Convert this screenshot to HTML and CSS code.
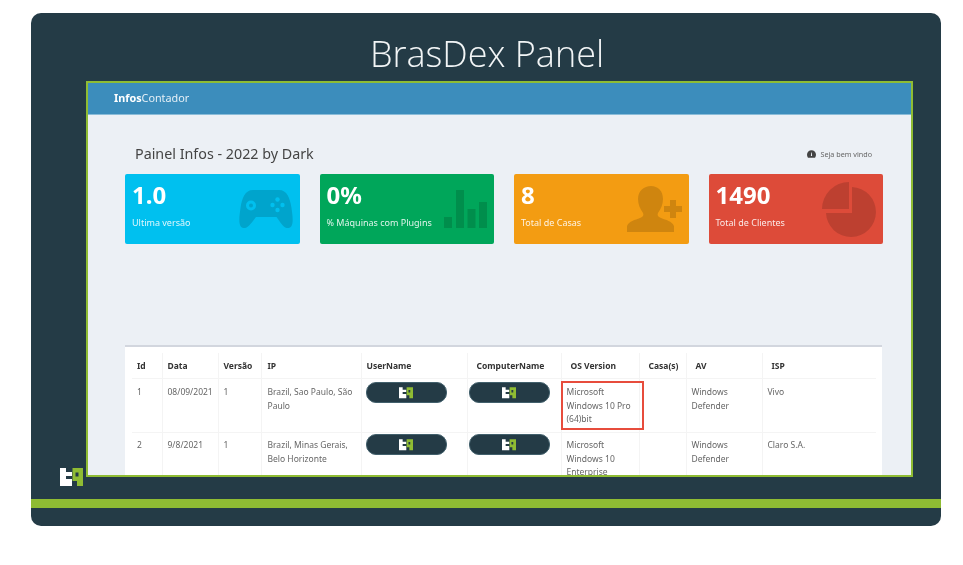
FILE: index.html
```html
<!DOCTYPE html>
<html lang="pt">
<head>
<meta charset="utf-8">
<title>BrasDex Panel</title>
<link rel="stylesheet" href="styles.css">
</head>
<body>
<svg class="defs" width="0" height="0" aria-hidden="true">
  <symbol id="logo" viewBox="0 0 23 19">
    <path fill="#fff" d="M0 0H6V4H12V8H6V11H12V18H0Z"/>
    <path fill="#8fbc33" fill-rule="evenodd" d="M12.500 0H23V18H17V13H12.500ZM15.500 4.500V8.500H18.500V4.500Z"/>
  </symbol>
</svg>
<main class="slide">
  <h1 class="title">BrasDex Panel</h1>
  <svg class="corner-logo"><use href="#logo"/></svg>
  <section class="panel">
    <header class="topbar"><b>Infos</b>Contador</header>
    <div class="content">
      <div class="page-head">
        <h2>Painel Infos - 2022 by Dark</h2>
        <span class="welcome">
          <svg viewBox="0 0 12 10" width="9" height="8"><path fill="#444" d="M6 0a6 6 0 0 0-6 6c0 1.500.5 2.800 1.300 4h9.400A7 7 0 0 0 12 6a6 6 0 0 0-6-6zm.8 7.800H5.200L5.600 3h.8z"/></svg>
          Seja bem vindo
        </span>
      </div>
      <div class="cards">
        <article class="card blue">
          <div class="num">1.0</div><div class="label">Ultima versão</div>
          <svg class="card-icon" viewBox="0 0 54 38"><path d="M14 0h26c8 0 11 8 12.500 18 1.500 10 2.500 19-3 20-5 1-8-6-12-11H17C13 32 9 39 4.500 38-1 37 0 28 1.500 18 3 8 6 0 14 0z"/><g fill="#00c0ef"><path fill-rule="evenodd" d="M12 10.500a5 5 0 1 0 0 10 5 5 0 0 0 0-10zm0 3a2 2 0 1 1 0 4 2 2 0 0 1 0-4z"/><circle cx="38.500" cy="9.500" r="2.200"/><circle cx="38.500" cy="20" r="2.200"/><circle cx="33.500" cy="15" r="2.200"/><circle cx="43.500" cy="15" r="2.200"/></g></svg>
        </article>
        <article class="card green">
          <div class="num">0%</div><div class="label">% Máquinas com Plugins</div>
          <svg class="card-icon bars" viewBox="0 0 43 38"><path d="M0 27h8v11H0zM12 0h8v38h-8zM23.500 19h8v19h-8zM35 12h8v26h-8z"/></svg>
        </article>
        <article class="card orange">
          <div class="num">8</div><div class="label">Total de Casas</div>
          <svg class="card-icon user" viewBox="0 0 55 46"><path d="M24 0c7 0 12 5 12 13 0 5-2 10-5 14-1 2 0 4 3 5 5 2 11 3 13 8v6H0v-6c2-5 8-6 13-8 3-1 4-3 3-5-3-4-5-9-5-14C11 5 17 0 24 0z"/><path d="M37 20h6v-6h6v6h6v6h-6v6h-6v-6h-6z"/></svg>
        </article>
        <article class="card red">
          <div class="num">1490</div><div class="label">Total de Clientes</div>
          <svg class="card-icon pie" viewBox="0 0 54 55"><path d="M30 5A25 25 0 1 1 4 31H30z"/><path d="M27 0V27H0A27 27 0 0 1 27 0z"/></svg>
        </article>
      </div>
      <div class="table-box">
        <table class="info">
          <colgroup><col class="c1"><col class="c2"><col class="c3"><col class="c4"><col class="c5"><col class="c6"><col class="c7"><col class="c8"><col class="c9"><col class="c10"></colgroup>
          <thead>
            <tr><th>Id</th><th>Data</th><th>Versão</th><th class="ip">IP</th><th>UserName</th><th class="ind">ComputerName</th><th class="ind">OS Version</th><th class="ind">Casa(s)</th><th class="ind">AV</th><th class="ind">ISP</th></tr>
          </thead>
          <tbody>
            <tr>
              <td>1</td><td>08/09/2021</td><td>1</td><td class="ip">Brazil, Sao Paulo, São Paulo</td>
              <td class="pillcell"><span class="pill"><svg><use href="#logo"/></svg></span></td>
              <td class="pillcell"><span class="pill"><svg><use href="#logo"/></svg></span></td>
              <td class="hl">Microsoft Windows 10 Pro (64)bit</td><td></td><td>Windows Defender</td><td>Vivo</td>
            </tr>
            <tr>
              <td>2</td><td>9/8/2021</td><td>1</td><td class="ip">Brazil, Minas Gerais, Belo Horizonte</td>
              <td class="pillcell"><span class="pill"><svg><use href="#logo"/></svg></span></td>
              <td class="pillcell"><span class="pill"><svg><use href="#logo"/></svg></span></td>
              <td>Microsoft Windows 10 Enterprise</td><td></td><td>Windows Defender</td><td>Claro S.A.</td>
            </tr>
          </tbody>
        </table>
      </div>
    </div>
  </section>
  <div class="bar"></div>
</main>
</body>
</html>
```
FILE: styles.css
```css
*, *::after { box-sizing: border-box; }
html, body { margin: 0; background: #fff; }
body { padding: 13px 22px 39px 31px; height: 565px; overflow: hidden; }
.defs { position: absolute; }
.slide { position: relative; width: 910px; height: 513px; background: #243b46; border-radius: 10px; overflow: hidden; display: flex; flex-direction: column; }
.title { margin: 0; height: 68px; font: 300 36px/82px "Open Sans", sans-serif; color: #f2f5f6; text-align: center; margin-left: 2px; filter: blur(.4px); }
.corner-logo { position: absolute; left: 29px; top: 455px; width: 23px; height: 19px; filter: blur(.4px); }
.panel { margin: 0 28px 0 55px; height: 396px; border: 2px solid #8fbc33; background: #ecf0f5; overflow: hidden; display: flex; flex-direction: column; filter: blur(.6px); flex: none; }
.topbar { height: 32px; flex: none; background: #3c8dbc; border-bottom: 1px solid #8abcd8; color: #e4eff6; font: 400 10.800px/29px "Noto Sans", sans-serif; padding-left: 26px; }
.topbar b { color: #fff; font-weight: 700; }
.content { flex: 1; min-height: 0; padding: 27px 29px 0 37px; }
.page-head { display: flex; justify-content: space-between; align-items: center; height: 24px; margin-left: 10px; }
.page-head h2 { margin: 0; font: 400 14.300px/24px "Noto Sans", sans-serif; color: #444; }
.welcome { font: 400 7.200px/24px "Noto Sans", sans-serif; color: #666; display: flex; align-items: center; gap: 4px; margin-right: 10px; }
.cards { display: grid; grid-template-columns: repeat(4, 174.500px); column-gap: 20px; margin-top: 8px; }
.card { position: relative; height: 70px; border-radius: 2px; color: #fff; padding: 6px 7px; overflow: hidden; }
.blue { background: #00c0ef; }
.green { background: #00a65a; }
.orange { background: #f39c12; }
.red { background: #dd4b39; }
.num { font: 700 24px/30px "Noto Sans", sans-serif; }
.label { font: 400 9px/14px "Noto Sans", sans-serif; margin-top: 6px; opacity: .88; }
.card-icon { position: absolute; right: 7px; top: 16px; width: 54px; height: 38px; fill: #000; opacity: .14; }
.bars { width: 43px; height: 38px; }
.user { top: 12px; width: 55px; height: 46px; }
.pie { top: 8px; width: 54px; height: 55px; }
.table-box { margin-top: 101px; height: 140px; background: #fff; border-top: 2px solid #d2d6de; padding: 6px 7px 0; }
.info { width: 744px; table-layout: fixed; border-collapse: collapse; font-family: "Noto Sans", sans-serif; }
.c1 { width: 30px; } .c2 { width: 56px; } .c3 { width: 43px; } .c4 { width: 100px; } .c5 { width: 106px; } .c6 { width: 94px; } .c7 { width: 78px; } .c8 { width: 47px; } .c9 { width: 76px; } .c10 { width: 114px; }
.info th, .info td { border: 1px solid #f4f4f4; border-top: 0; padding: 0 5px; text-align: left; vertical-align: top; }
.info tr > :first-child, .info tr > :last-child { border-left: 0; border-right: 0; }
.info th { height: 25px; font-size: 8.500px; line-height: 25px; font-weight: 700; color: #333; white-space: nowrap; }
.info th.ind { padding-left: 9px; }
.info td { height: 54px; padding-top: 6px; font-size: 8.500px; line-height: 13.500px; color: #666; }
.info .ip { padding-left: 6px; }
.info tr + tr td { padding-top: 5px; }
.info td.pillcell { padding: 3px 5px 0 4px; }
.info td.pillcell + td.pillcell { padding-left: 1px; }
.info tr + tr td.pillcell { padding-top: 1px; }
.pill { display: flex; align-items: center; justify-content: center; width: 81px; height: 21px; border-radius: 10px; background: #243b46; border: 1px solid #42606c; }
.pill svg { width: 14px; height: 12px; }
.info td.hl { position: relative; }
.info td.hl::after { content: ""; position: absolute; left: -1px; top: 2px; width: 83px; height: 49px; border: 2px solid #e74c3c; }
.bar { height: 9px; margin-top: 22px; background: #8fbc33; flex: none; }
```
